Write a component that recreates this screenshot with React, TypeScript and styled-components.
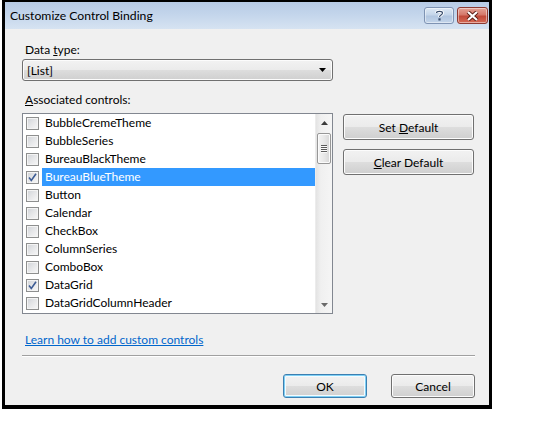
import React from "react";
import styled, { createGlobalStyle, css } from "styled-components";

const Global = createGlobalStyle`
  html, body { margin: 0; padding: 0; background: #ffffff; }
  body { font-family: "Lato", "Noto Sans", sans-serif; font-size: 12px; color: #000; }
  * { box-sizing: border-box; }
`;

const Window = styled.div`
  margin-left: 2px;
  width: 490px;
  height: 409px;
  border: 3px solid #000;
  border-top-width: 2px;
  border-bottom-width: 4px;
  background: #f0f0f0;
  display: flex;
  flex-direction: column;
`;

const TitleBar = styled.div`
  height: 27px;
  flex: none;
  display: flex;
  align-items: flex-start;
  justify-content: space-between;
  background: linear-gradient(to bottom, #b7cbe5 0%, #c3d5eb 45%, #d6e3f2 100%);
  padding: 0 1px 0 5px;
`;

const Title = styled.div`
  font-size: 12.2px;
  line-height: 15px;
  padding-top: 6px;
  color: #000;
`;

const Caps = styled.div`
  display: flex;
  gap: 3px;
  padding-top: 5px;
`;

const CapButton = styled.div<{ $close?: boolean }>`
  width: ${(p) => (p.$close ? 31 : 30)}px;
  height: 17px;
  border-radius: 3px;
  border: 1px solid ${(p) => (p.$close ? "#8d3a32" : "#7e93b3")};
  display: flex;
  align-items: center;
  justify-content: center;
  box-shadow: inset 0 0 0 1px rgba(255, 255, 255, 0.45);
  background: ${(p) =>
    p.$close
      ? "linear-gradient(to bottom, #e3a295 0%, #d5786a 45%, #c14a3a 55%, #d56a55 100%)"
      : "linear-gradient(to bottom, #dde8f4 0%, #c5d6ea 45%, #b2c6e0 55%, #c3d5ea 100%)"};
`;

const Body = styled.div`
  flex: 1;
  display: flex;
  flex-direction: column;
  padding: 13px 14px 0 17px;
`;

const Label = styled.div<{ $gap?: number }>`
  line-height: 15px;
  padding-left: 3px;
  margin-top: ${(p) => p.$gap ?? 0}px;
`;

const buttonFace = css`
  border: 1px solid #707070;
  border-radius: 3px;
  box-shadow: inset 0 0 0 1px #fcfcfc;
  background: linear-gradient(to bottom, #f2f2f2 0%, #ebebeb 48%, #dddddd 52%, #cfcfcf 100%);
`;

const Select = styled.div`
  ${buttonFace};
  margin-top: 2px;
  width: 311px;
  height: 22px;
  display: flex;
  align-items: center;
  justify-content: space-between;
  padding: 0 6px 0 4px;
`;

const Main = styled.div`
  display: flex;
  gap: 10px;
  margin-top: 6px;
`;

const ListBox = styled.div`
  width: 311px;
  height: 201px;
  border: 1px solid #828790;
  background: #fff;
  display: flex;
  overflow: hidden;
`;

const Rows = styled.div`
  flex: 1;
  display: flex;
  flex-direction: column;
`;

const Row = styled.div`
  height: 18px;
  flex: none;
  display: flex;
  align-items: center;
  padding-left: 3px;
`;

const Box = styled.div`
  width: 13px;
  height: 13px;
  flex: none;
  border: 1px solid #8e8f8f;
  box-shadow: inset 0 0 0 1px #f4f4f4;
  background: linear-gradient(135deg, #cfd2d7 0%, #e6e7e9 50%, #f8f8f8 100%);
  display: flex;
  align-items: center;
  justify-content: center;
`;

const ItemText = styled.div<{ $selected?: boolean }>`
  flex: 1;
  height: 18px;
  line-height: 18px;
  margin-left: 3px;
  padding-left: 3px;
  color: ${(p) => (p.$selected ? "#fff" : "#000")};
  background: ${(p) => (p.$selected ? "#3399ff" : "transparent")};
`;

const ScrollBar = styled.div`
  width: 17px;
  flex: none;
  display: flex;
  flex-direction: column;
  align-items: center;
  background: linear-gradient(to right, #e3e3e3 0%, #f0f0f0 30%, #f5f5f5 100%);
  border-left: 1px solid #ececec;
`;

const ArrowCell = styled.div`
  height: 17px;
  width: 100%;
  flex: none;
  display: flex;
  align-items: center;
  justify-content: center;
`;

const Thumb = styled.div`
  width: 14px;
  height: 31px;
  margin-top: 2px;
  border: 1px solid #979797;
  border-radius: 2px;
  box-shadow: inset 0 0 0 1px #fbfbfb;
  background: linear-gradient(to right, #f4f4f4 0%, #e8e8e8 50%, #d7d7d7 100%);
  display: flex;
  flex-direction: column;
  align-items: center;
  justify-content: center;
  gap: 1px;
`;

const Grip = styled.div`
  width: 6px;
  height: 1px;
  background: #5b5b5b;
  box-shadow: 0 1px 0 #fafafa;
`;

const Track = styled.div`
  flex: 1;
`;

const Side = styled.div`
  display: flex;
  flex-direction: column;
  gap: 9px;
  padding-top: 1px;
`;

const Button = styled.div<{ $w: number; $h: number; $default?: boolean }>`
  ${buttonFace};
  width: ${(p) => p.$w}px;
  height: ${(p) => p.$h}px;
  display: flex;
  align-items: center;
  justify-content: center;
  ${(p) =>
    p.$default &&
    css`
      border-color: #3c7fb1;
      box-shadow: inset 0 0 0 1px #7fd0f5, inset 0 0 0 2px #f4fbfe;
    `}
`;

const Link = styled.a`
  margin-top: 18px;
  padding-left: 3px;
  line-height: 15px;
  color: #0066cc;
  text-decoration: underline;
  align-self: flex-start;
`;

const Separator = styled.div`
  margin-top: 8px;
  height: 2px;
  border-top: 1px solid #a0a0a0;
  border-bottom: 1px solid #ffffff;
`;

const Footer = styled.div`
  margin-top: 17px;
  display: flex;
  justify-content: flex-end;
  gap: 24px;
`;

const items: { name: string; checked?: boolean; selected?: boolean }[] = [
  { name: "BubbleCremeTheme" },
  { name: "BubbleSeries" },
  { name: "BureauBlackTheme" },
  { name: "BureauBlueTheme", checked: true, selected: true },
  { name: "Button" },
  { name: "Calendar" },
  { name: "CheckBox" },
  { name: "ColumnSeries" },
  { name: "ComboBox" },
  { name: "DataGrid", checked: true },
  { name: "DataGridColumnHeader" },
];

const Check = () => (
  <svg width="9" height="9" viewBox="0 0 9 9">
    <path d="M1 4.6 L3.3 7.4 L8 0.8" fill="none" stroke="#3d5c94" strokeWidth="1.6" />
  </svg>
);

const TriDown = ({ color = "#000" }: { color?: string }) => (
  <svg width="7" height="4" viewBox="0 0 7 4">
    <path d="M0 0 H7 L3.5 4 Z" fill={color} />
  </svg>
);

const TriUp = () => (
  <svg width="7" height="4" viewBox="0 0 7 4">
    <path d="M0 4 H7 L3.5 0 Z" fill="#3c3c3c" />
  </svg>
);

export default function App() {
  return (
    <>
      <Global />
      <Window>
        <TitleBar>
          <Title>Customize Control Binding</Title>
          <Caps>
            <CapButton>
              <svg width="9" height="11" viewBox="0 0 9 11">
                <path
                  d="M1.5 3 C1.5 0.8 7.5 0.8 7.5 3 C7.5 5 4.5 5 4.5 7"
                  fill="none"
                  stroke="#ffffff"
                  strokeWidth="3"
                />
                <path
                  d="M1.5 3 C1.5 0.8 7.5 0.8 7.5 3 C7.5 5 4.5 5 4.5 7"
                  fill="none"
                  stroke="#3b4f6e"
                  strokeWidth="1.2"
                />
                <rect x="3.4" y="8.3" width="2.2" height="2.2" fill="#3b4f6e" />
              </svg>
            </CapButton>
            <CapButton $close>
              <svg width="13" height="10" viewBox="0 0 13 10">
                <path d="M2 1 L11 9 M11 1 L2 9" stroke="#5a1e16" strokeWidth="4" />
                <path d="M2 1 L11 9 M11 1 L2 9" stroke="#ffffff" strokeWidth="2.2" />
              </svg>
            </CapButton>
          </Caps>
        </TitleBar>
        <Body>
          <Label>
            Data <u>t</u>ype:
          </Label>
          <Select>
            <span>[List]</span>
            <TriDown />
          </Select>
          <Label $gap={11}>
            <u>A</u>ssociated controls:
          </Label>
          <Main>
            <ListBox>
              <Rows>
                {items.map((it) => (
                  <Row key={it.name}>
                    <Box>{it.checked && <Check />}</Box>
                    <ItemText $selected={it.selected}>{it.name}</ItemText>
                  </Row>
                ))}
              </Rows>
              <ScrollBar>
                <ArrowCell>
                  <TriUp />
                </ArrowCell>
                <Thumb>
                  <Grip />
                  <Grip />
                  <Grip />
                  <Grip />
                </Thumb>
                <Track />
                <ArrowCell>
                  <TriDown color="#6a6a6a" />
                </ArrowCell>
              </ScrollBar>
            </ListBox>
            <Side>
              <Button $w={131} $h={26}>
                Set&nbsp;<u>D</u>efault
              </Button>
              <Button $w={131} $h={26}>
                <u>C</u>lear Default
              </Button>
            </Side>
          </Main>
          <Link href="#">Learn how to add custom controls</Link>
          <Separator />
          <Footer>
            <Button $w={84} $h={24} $default>
              OK
            </Button>
            <Button $w={84} $h={24}>
              Cancel
            </Button>
          </Footer>
        </Body>
      </Window>
    </>
  );
}
